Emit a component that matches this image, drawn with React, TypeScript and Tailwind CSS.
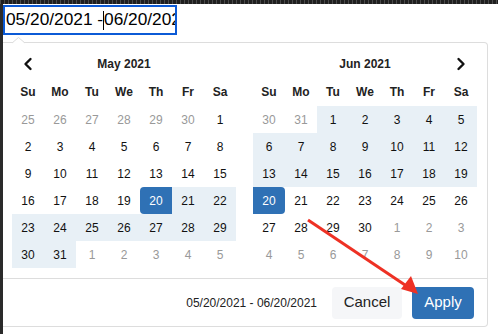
import React from "react";

type Cell = { d: number; off: boolean; state?: "start" | "end" | "range" };

const DOW = ["Su", "Mo", "Tu", "We", "Th", "Fr", "Sa"];

function buildMonth(firstOffset: number, prevDays: number, days: number, which: "may" | "jun"): Cell[] {
  const cells: Cell[] = [];
  for (let i = firstOffset; i > 0; i--) cells.push({ d: prevDays - i + 1, off: true });
  for (let d = 1; d <= days; d++) {
    let state: Cell["state"];
    if (which === "may") {
      if (d === 20) state = "start";
      else if (d > 20) state = "range";
    } else {
      if (d === 20) state = "end";
      else if (d < 20) state = "range";
    }
    cells.push({ d, off: false, state });
  }
  let n = 1;
  while (cells.length < 42) cells.push({ d: n++, off: true });
  return cells;
}

const may = buildMonth(6, 30, 31, "may");
const jun = buildMonth(2, 31, 30, "jun");

function Chevron({ dir }: { dir: "left" | "right" }) {
  return (
    <svg width="10" height="14" viewBox="0 0 10 14" className="mx-auto">
      <path
        d={dir === "left" ? "M7.5 2 L2.5 7 L7.5 12" : "M2.5 2 L7.5 7 L2.5 12"}
        fill="none"
        stroke="#111"
        strokeWidth="2.4"
        strokeLinecap="round"
        strokeLinejoin="round"
      />
    </svg>
  );
}

function Calendar({ title, cells, prev, next }: { title: string; cells: Cell[]; prev?: boolean; next?: boolean }) {
  return (
    <div className="w-[224px]">
      <div className="grid grid-cols-7 h-[28px] items-center text-[12px] font-bold text-[#222]">
        <div>{prev && <Chevron dir="left" />}</div>
        <div className="col-span-5 text-center">{title}</div>
        <div>{next && <Chevron dir="right" />}</div>
      </div>
      <div className="grid grid-cols-7 h-[28px] items-center text-[12px] font-bold text-[#222]">
        {DOW.map((d) => (
          <div key={d} className="text-center">
            {d}
          </div>
        ))}
      </div>
      <div className="grid grid-cols-7">
        {cells.map((c, i) => {
          let cls = "text-[#111]";
          if (c.off) cls = "text-[#999]";
          if (c.state === "range") cls = "bg-[#e8f0f6] text-[#111]";
          if (c.state === "start") cls = "bg-[#2f71b5] text-white rounded-l-[4px]";
          if (c.state === "end") cls = "bg-[#2f71b5] text-white rounded-r-[4px]";
          return (
            <div key={i} className={`h-[27px] flex items-center justify-center text-[12px] ${cls}`}>
              {c.d}
            </div>
          );
        })}
      </div>
    </div>
  );
}

export default function App() {
  return (
    <div className="relative w-[498px] h-[334px] bg-white overflow-hidden font-['Liberation_Sans',Arial,sans-serif]">
      <div className="h-[4px] bg-[#1f1f1f] bg-[repeating-linear-gradient(90deg,#4a4a4a_0_1px,#1f1f1f_1px_4px)]" />
      <div className="flex">
        <div className="w-[3px] h-[330px] bg-[#2a2a2a]" />
        <div className="flex-1">
          <div className="mt-[1px] h-[30px] w-[174px] border-2 border-[#0b5ad6] flex items-center pl-[1px] overflow-hidden whitespace-nowrap text-[17.3px] text-black leading-none">
            <span className="shrink-0">05/20/2021&nbsp;-</span>
            <span className="shrink-0 inline-block w-px h-[19px] bg-black" />
            <span className="shrink-0">06/20/2021</span>
          </div>
          <div className="relative mt-[7px] w-[485px] border border-l-0 border-[#ddd] rounded-r-[4px]">
            <svg className="absolute left-[8px] top-[-7px]" width="16" height="8" viewBox="0 0 16 8">
              <polygon points="1,7.5 7.5,1.5 14,7.5" fill="white" />
              <polyline points="1,7 7.5,1.5 14,7" fill="none" stroke="#ddd" strokeWidth="1" />
            </svg>
            <div className="flex gap-[17px] pl-[9px] pr-[10px] pt-[7px] pb-[10px]">
              <Calendar title="May 2021" cells={may} prev />
              <Calendar title="Jun 2021" cells={jun} next />
            </div>
            <div className="h-[48px] border-t border-[#ddd] flex items-center justify-end pr-[13px]">
              <span className="text-[12px] text-[#222] mr-[15px]">05/20/2021 - 06/20/2021</span>
              <button className="w-[70px] h-[32px] rounded-[4px] bg-[#f5f6f8] text-[15px] text-[#222]">Cancel</button>
              <button className="ml-[10px] w-[62px] h-[32px] rounded-[4px] bg-[#2f71b5] text-[15px] text-white">Apply</button>
            </div>
          </div>
        </div>
      </div>
      <svg className="absolute inset-0 pointer-events-none" width="498" height="334" viewBox="0 0 498 334">
        <line x1="308" y1="220" x2="405" y2="285" stroke="#ee3124" strokeWidth="3" />
        <polygon points="418,294 401,289 411,276" fill="#ee3124" />
      </svg>
    </div>
  );
}
